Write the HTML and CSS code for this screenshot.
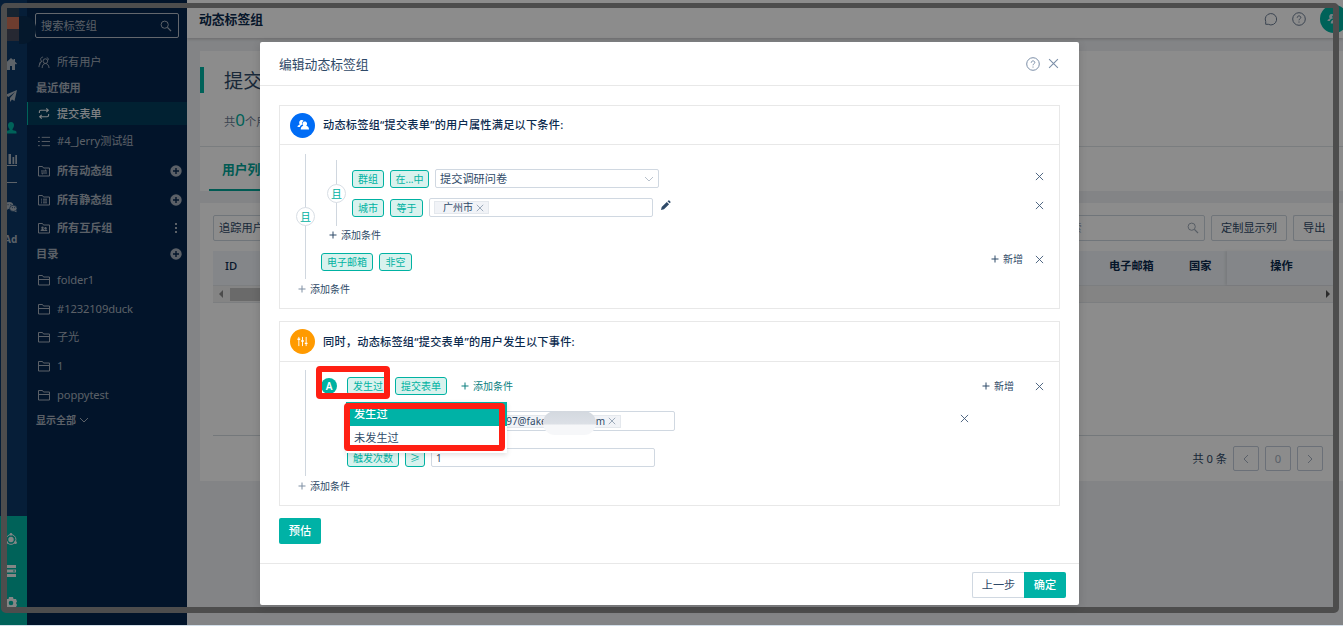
FILE: index.html
```html
<!DOCTYPE html>
<html lang="zh-CN">
<head>
    <meta charset="UTF-8">
    <meta name="viewport" content="width=device-width, initial-scale=1.0">
    <title>动态标签组</title>
    <link rel="stylesheet" href="styles.css">
</head>
<body>

<!-- 图标 -->
<svg class="sprite" xmlns="http://www.w3.org/2000/svg">
    <symbol id="i-search" viewBox="0 0 12 12"><circle cx="4.7" cy="4.7" r="3.6" fill="none" stroke="currentColor"/><path d="M7.4 7.4 11 11" stroke="currentColor" stroke-width="1.2"/></symbol>
    <symbol id="i-x" viewBox="0 0 10 10"><path d="M1 1l8 8M9 1l-8 8" fill="none" stroke="currentColor"/></symbol>
    <symbol id="i-plus" viewBox="0 0 8 8"><path d="M4 .5v7M.5 4h7" fill="none" stroke="currentColor"/></symbol>
    <symbol id="i-down" viewBox="0 0 10 10"><path d="M1 3l4 4 4-4" fill="none" stroke="currentColor"/></symbol>
    <symbol id="i-help" viewBox="0 0 14 14"><circle cx="7" cy="7" r="6.3" fill="none" stroke="currentColor"/><path d="M5.2 5.7c0-2.4 3.6-2.3 3.6-.2C8.8 6.8 7 6.8 7 8.3M7 9.500v1.100" fill="none" stroke="currentColor"/></symbol>
    <symbol id="i-add" viewBox="0 0 12 12"><circle cx="6" cy="6" r="5.7" fill="currentColor"/><path d="M6 3v6M3 6h6" stroke="#04264e" stroke-width="1.4"/></symbol>
    <symbol id="i-folder" viewBox="0 0 12 12"><path d="M.5 1.5h4l1 1.5h6v8H.5zM.5 5.5h11" fill="none" stroke="currentColor"/></symbol>
    <symbol id="i-folder-sync" viewBox="0 0 12 12"><path d="M.5 1.5h4l1 1.5h6v8H.5zM3 6h5.500L7 4.700M9 8H3.500L5 9.300" fill="none" stroke="currentColor"/></symbol>
    <symbol id="i-folder-list" viewBox="0 0 12 12"><path d="M.5 1.5h4l1 1.5h6v8H.5zM3 5.200h1M5 5.200h4M3 7h1M5 7h4M3 8.800h1M5 8.800h4" fill="none" stroke="currentColor"/></symbol>
    <symbol id="i-folder-users" viewBox="0 0 12 12"><path d="M.5 1.5h4l1 1.5h6v8H.5z" fill="none" stroke="currentColor"/><circle cx="4.500" cy="5.700" r="1.200" fill="currentColor"/><circle cx="7.500" cy="6.300" r="1.200" fill="currentColor"/><path d="M2.500 9c.3-2.500 3.500-2.500 3.800-.8 1-1.300 3-.8 3.200.8z" fill="currentColor"/></symbol>
    <symbol id="i-users" viewBox="0 0 13 14"><path d="M2 9.500C1.500 7 3 6 4 5.500 1.500 3.500 3.500 1 5.500 1.200M4.200 5.700C3 6.500 1.200 8.500 1 12" fill="none" stroke="currentColor"/><circle cx="8" cy="5.500" r="2.500" fill="none" stroke="currentColor"/><path d="M4.500 13c0-6.500 7-6.500 7.500 0M9.500 1.500c1.500.5 2 2 1.500 3" fill="none" stroke="currentColor"/></symbol>
    <symbol id="i-sync" viewBox="0 0 13 13"><path d="M1.500 6V4.500c0-1 .5-1.500 1.500-1.500h8M9 1l2.200 2L9 5M11.500 7v1.500c0 1-.5 1.500-1.500 1.500H2M4 8l-2.200 2L4 12" fill="none" stroke="currentColor" stroke-width="1.200"/></symbol>
    <symbol id="i-list" viewBox="0 0 13 11"><path d="M0 1h2M4 1h9M0 5.500h2M4 5.500h9M0 10h2M4 10h9" stroke="currentColor"/></symbol>
    <symbol id="i-home" viewBox="0 0 12 12"><path d="M6 0 0 5.500 1 6.500 2 5.800V12h3V8h2v4h3V5.800l1 .7 1-1-2-1.800V1H8.500v1.300z" fill="currentColor"/></symbol>
    <symbol id="i-send" viewBox="0 0 12 12"><path d="M12 0 0 5l3.500 2L10 2 5 8v4l2-2.500L9.500 11z" fill="currentColor"/></symbol>
    <symbol id="i-user" viewBox="0 0 12 12"><path d="M6 0c2 0 3 1.500 3 3.200S8 6.500 7.500 7v1c2 .6 4 1 4 2v1.500H.5V10c0-1 2-1.400 4-2V7C4 6.500 3 5 3 3.200S4 0 6 0z" fill="currentColor"/></symbol>
    <symbol id="i-chart" viewBox="0 0 12 12"><path d="M0 11.500h12" stroke="currentColor"/><path d="M0 5h2v5H0zM3.500 0H6v10H3.500zM7.500 3h1.700v7H7.500zM10.300 1H12v9h-1.700z" fill="currentColor"/></symbol>
    <symbol id="i-wechat" viewBox="0 0 13 12"><ellipse cx="4.500" cy="4.500" rx="4.500" ry="3.800" fill="currentColor"/><path d="M1.500 9.500 2 7l2 1z" fill="currentColor"/><ellipse cx="9" cy="7.500" rx="4" ry="3.300" fill="currentColor" stroke="#0b3866" stroke-width=".7"/><path d="M10 10.500l2.300-.8.200 2z" fill="currentColor"/><path d="M2.800 3.500h1M5.800 3.500h1M7.500 6.700h1M10 6.700h1" stroke="#0b3866"/></symbol>
    <symbol id="i-orbit" viewBox="0 0 12 12"><circle cx="6" cy="6.500" r="2.700" fill="currentColor"/><circle cx="6" cy="6.500" r="4.900" fill="none" stroke="currentColor"/><circle cx="6" cy="1.300" r="1.300" fill="currentColor"/><circle cx="1.600" cy="9.500" r="1.500" fill="currentColor"/><circle cx="10.400" cy="9.500" r="1.500" fill="currentColor"/></symbol>
    <symbol id="i-server" viewBox="0 0 12 12"><path d="M0 0h11v3H0zM0 4.500h11v3H0zM0 9h11v3H0z" fill="currentColor"/><path d="M8 6h2" stroke="#00b2a2"/></symbol>
    <symbol id="i-gear" viewBox="0 0 12 12"><path fill-rule="evenodd" d="M4 0h4l.5 2H11l1 2.500-1 1.500 1 2-1 2H8.500L8 12H4l-.5-2H1L0 8l1-2-1-1.500L1 2h2.500zM6 3.700a2.300 2.300 0 1 0 0 4.600 2.300 2.300 0 1 0 0-4.600z" fill="currentColor"/></symbol>
    <symbol id="i-chat" viewBox="0 0 14 14"><path d="M1.700 12.300V9.500A5.700 5.700 0 1 1 4.300 12.300z" fill="none" stroke="currentColor"/></symbol>
    <symbol id="i-people" viewBox="0 0 12 12"><path d="M4.500 1c1 0 1.700.4 2 1C5 2.800 4.800 4 5.300 5.500 4 6 3 7 2.900 8H.5c0-1.400 1-2 2.300-2.500C1.500 3.500 2.500 1 4.500 1z" fill="currentColor"/><path d="M7.800 2.500c2.300 0 3 2.600 1.500 4.300C11 7.400 12 8 12 10.500H3.700c0-2 1-3 2.600-3.700-1.500-1.700-.8-4.300 1.500-4.300z" fill="currentColor"/></symbol>
    <symbol id="i-sliders" viewBox="0 0 12 12"><path d="M2 1v10M6 1v10M10 1v10" stroke="currentColor"/><path d="M.5 3.500h3M4.500 5.500h3M8.500 8h3" stroke="currentColor" stroke-width="1.500"/></symbol>
    <symbol id="i-pencil" viewBox="0 0 10 10"><path d="M0 10l.7-3L5.800 2l2.300 2.200L3 9.300zM6.500 1.300 7.500.4c.5-.5 2.500 1.400 2 2l-.8.900z" fill="currentColor"/></symbol>
</svg>

<div class="app">
    <nav class="rail">
        <div class="logo"><i></i><i></i><i></i></div>
        <svg class="rail-icon"><use href="#i-home"/></svg>
        <svg class="rail-icon"><use href="#i-send"/></svg>
        <svg class="rail-icon active"><use href="#i-user"/></svg>
        <svg class="rail-icon"><use href="#i-chart"/></svg>
        <span class="rail-line"></span>
        <svg class="rail-icon"><use href="#i-wechat"/></svg>
        <b class="rail-ad">Ad</b>
        <div class="rail-bottom">
            <svg class="rail-icon"><use href="#i-orbit"/></svg>
            <svg class="rail-icon"><use href="#i-server"/></svg>
            <svg class="rail-icon"><use href="#i-gear"/></svg>
        </div>
    </nav>

    <aside class="sidebar">
        <div class="side-search"><span>搜索标签组</span><svg class="s12"><use href="#i-search"/></svg></div>
        <div class="side-item first"><svg class="s13"><use href="#i-users"/></svg>所有用户</div>
        <div class="side-title recent">最近使用</div>
        <div class="side-item current"><svg class="s13"><use href="#i-sync"/></svg>提交表单</div>
        <div class="side-item tall"><svg class="s13"><use href="#i-list"/></svg>#4_Jerry测试组</div>
        <div class="side-item bold"><svg class="s12"><use href="#i-folder-sync"/></svg>所有动态组<svg class="s12 end"><use href="#i-add"/></svg></div>
        <div class="side-item bold"><svg class="s12"><use href="#i-folder-list"/></svg>所有静态组<svg class="s12 end"><use href="#i-add"/></svg></div>
        <div class="side-item bold"><svg class="s12"><use href="#i-folder-users"/></svg>所有互斥组<span class="dots end"><i></i><i></i><i></i></span></div>
        <div class="side-title">目录<svg class="s12 end"><use href="#i-add"/></svg></div>
        <div class="side-item"><svg class="s12"><use href="#i-folder"/></svg>folder1</div>
        <div class="side-item"><svg class="s12"><use href="#i-folder"/></svg>#1232109duck</div>
        <div class="side-item"><svg class="s12"><use href="#i-folder"/></svg>子光</div>
        <div class="side-item"><svg class="s12"><use href="#i-folder"/></svg>1</div>
        <div class="side-item"><svg class="s12"><use href="#i-folder"/></svg>poppytest</div>
        <div class="side-more">显示全部<svg class="s10"><use href="#i-down"/></svg></div>
    </aside>

    <main class="main">
        <header class="topbar">
            <h1>动态标签组</h1>
            <svg class="s14 chat"><use href="#i-chat"/></svg>
            <svg class="s14"><use href="#i-help"/></svg>
            <span class="avatar"><svg class="s12"><use href="#i-people"/></svg></span>
        </header>
        <section class="card summary">
            <h2>提交表单</h2>
            <p class="count">共<em>0</em>个用户</p>
            <div class="tabs"><span class="tab">用户列表</span></div>
        </section>
        <section class="card list">
            <div class="toolbar">
                <span class="box track">追踪用户</span>
                <span class="box find"><span>输入搜索</span><svg class="s12"><use href="#i-search"/></svg></span>
                <span class="box">定制显示列</span>
                <span class="box export">导出</span>
            </div>
            <div class="thead">
                <span class="th id">ID</span>
                <span class="th mail">电子邮箱</span>
                <span class="th country">国家</span>
                <span class="th ops">操作</span>
            </div>
            <div class="hscroll"><i class="arrow left"></i><i class="thumb"></i><i class="arrow right"></i></div>
            <div class="tbody"></div>
            <div class="pager">
                <span>共 0 条</span>
                <span class="page"><svg class="s10 prev"><use href="#i-down"/></svg></span>
                <span class="page">0</span>
                <span class="page"><svg class="s10 next"><use href="#i-down"/></svg></span>
            </div>
        </section>
    </main>
    <span class="logo-blur"></span>
</div>

<div class="mask"></div>
<div class="frame"></div>

<div class="modal">
    <div class="modal-head">
        <span>编辑动态标签组</span>
        <svg class="s14 help"><use href="#i-help"/></svg>
        <svg class="s11"><use href="#i-x"/></svg>
    </div>

    <div class="modal-body">
        <!-- 用户属性 -->
        <section class="panel attrs">
            <div class="panel-head"><span class="badge blue"><svg class="s12"><use href="#i-people"/></svg></span>动态标签组“提交表单”的用户属性满足以下条件:</div>
            <div class="group outer">
                <div class="joint"><span class="and">且</span></div>
                <div class="rows">
                    <div class="group inner">
                        <div class="joint"><span class="and">且</span></div>
                        <div class="rows">
                            <div class="row">
                                <span class="tag">群组</span>
                                <span class="tag w39">在...中</span>
                                <span class="field select">提交调研问卷<svg class="s10"><use href="#i-down"/></svg></span>
                                <svg class="s9 remove"><use href="#i-x"/></svg>
                            </div>
                            <div class="row">
                                <span class="tag">城市</span>
                                <span class="tag w33">等于</span>
                                <span class="field"><span class="chip">广州市<svg class="s8"><use href="#i-x"/></svg></span></span>
                                <svg class="s10 pencil"><use href="#i-pencil"/></svg>
                                <svg class="s9 remove"><use href="#i-x"/></svg>
                            </div>
                        </div>
                    </div>
                    <div class="add inner-add"><svg class="s8"><use href="#i-plus"/></svg>添加条件</div>
                    <div class="row mail-row">
                        <span class="tag w52">电子邮箱</span>
                        <span class="tag w33">非空</span>
                        <span class="new"><svg class="s8"><use href="#i-plus"/></svg>新增</span>
                        <svg class="s9 remove"><use href="#i-x"/></svg>
                    </div>
                </div>
            </div>
            <div class="add outer-add"><svg class="s8"><use href="#i-plus"/></svg>添加条件</div>
        </section>

        <!-- 用户事件 -->
        <section class="panel events">
            <div class="panel-head"><span class="badge orange"><svg class="s11"><use href="#i-sliders"/></svg></span>同时，动态标签组“提交表单”的用户发生以下事件:</div>
            <div class="group outer">
                <div class="joint"></div>
                <div class="rows">
                    <div class="row event-row">
                        <span class="letter">A</span>
                        <span class="tag w42">发生过</span>
                        <span class="tag w52">提交表单</span>
                        <span class="add green"><svg class="s8"><use href="#i-plus"/></svg>添加条件</span>
                        <span class="new"><svg class="s8"><use href="#i-plus"/></svg>新增</span>
                        <svg class="s9 remove"><use href="#i-x"/></svg>
                    </div>
                    <div class="row value-row">
                        <span class="field"><span class="chip mail-chip"><span>297@fake</span><span>m</span><svg class="s8"><use href="#i-x"/></svg></span></span>
                        <svg class="s9 remove"><use href="#i-x"/></svg>
                    </div>
                    <div class="row times-row">
                        <span class="tag w52">触发次数</span>
                        <span class="tag w20">≥</span>
                        <span class="field">1</span>
                    </div>
                </div>
            </div>
            <div class="add outer-add"><svg class="s8"><use href="#i-plus"/></svg>添加条件</div>
        </section>

        <button class="btn primary">预估</button>
    </div>

    <div class="modal-foot">
        <button class="btn plain">上一步</button>
        <button class="btn primary last">确定</button>
    </div>

    <!-- 下拉菜单和标注 -->
    <span class="smudge"></span>
    <ul class="dropdown">
        <li class="on">发生过</li>
        <li>未发生过</li>
    </ul>
    <span class="mark mark-tag"></span>
    <span class="mark mark-menu"></span>
</div>

</body>
</html>
```
FILE: styles.css
```css
* {
    box-sizing: border-box;
}
body {
    margin: 0;
    height: 626px;
    overflow: hidden;
    background: #d3dfe9;
    font-family: "Noto Sans", "Noto Sans CJK SC", sans-serif;
    font-size: 11.2px;
    line-height: 16px;
    color: #2f4a68;
}
h1, h2, p, ul {
    margin: 0;
    padding: 0;
    font-weight: 400;
    list-style: none;
}
svg {
    flex: none;
    display: block;
}
.sprite {
    position: absolute;
    width: 0;
    height: 0;
}
.s8 { width: 8px; height: 8px; }
.s9 { width: 9px; height: 9px; }
.s10 { width: 10px; height: 10px; }
.s11 { width: 11px; height: 11px; }
.s12 { width: 12px; height: 12px; }
.s13 { width: 13px; height: 13px; }
.s14 { width: 14px; height: 14px; }
.end {
    margin-left: auto;
}

.app {
    display: flex;
    height: 625px;
    background: #eef0f4;
}

/* 左侧图标栏 */
.rail {
    width: 27px;
    display: flex;
    flex-direction: column;
    background: #0b3866;
    color: #a9b4c0;
}
.logo {
    width: 13px;
    height: 34px;
    margin: 8px 0 16px 6px;
    display: flex;
    flex-direction: column;
}
.logo i {
    height: 9px;
    background: #294259;
}
.logo i:nth-child(2) {
    height: 12px;
    background: #c97056;
}
.logo i:nth-child(3) {
    height: 12px;
    background: #46495c;
}
.logo-blur {
    position: absolute;
    left: 19px;
    top: 16px;
    width: 17px;
    height: 28px;
    border-radius: 0 12px 14px 0;
    background: #0a2c50;
}
.rail-icon {
    width: 12px;
    height: 12px;
    margin: 0 0 20px 5px;
}
.rail-icon.active {
    color: #00b2a2;
}
.rail-line {
    width: 11px;
    height: 1px;
    margin: -4px 0 18px 6px;
    background: #a9b4c0;
}
.rail-ad {
    margin: -2px 0 0 4px;
    font-size: 10px;
}
.rail-bottom {
    height: 109px;
    margin-top: auto;
    padding-top: 17px;
    background: #00b2a2;
    color: #f0f4f5;
}

/* 标签组侧栏 */
.sidebar {
    width: 160px;
    background: #04264e;
    color: #a6afbc;
}
.side-search {
    display: flex;
    align-items: center;
    justify-content: space-between;
    width: 144px;
    height: 25px;
    margin: 13px 0 0 8px;
    padding: 0 6px 0 5px;
    border: 1px solid #b4bcc7;
    border-radius: 2px;
}
.side-item {
    display: flex;
    align-items: center;
    height: 28.75px;
    padding: 0 5px 0 11px;
    letter-spacing: -.1px;
}
.side-item svg:first-child {
    width: 12px;
    margin-right: 7px;
}
.side-item.first {
    height: 24px;
    margin-top: 12px;
}
.side-item.tall {
    height: 32px;
}
.side-item.current {
    height: 23px;
    padding-left: 10px;
    border-left: 1px solid #00b2a2;
    background: #033c5c;
    color: #e8ecf0;
    font-weight: 500;
}
.side-item.bold {
    height: 28.5px;
}
.side-item.bold,
.side-title,
.side-more {
    font-weight: 700;
}
.side-title {
    display: flex;
    align-items: center;
    height: 23px;
    padding: 0 5px 0 9px;
}
.side-title.recent {
    height: 28px;
}
.side-more {
    display: flex;
    align-items: center;
    gap: 3px;
    height: 22px;
    padding-left: 9px;
    font-size: 10px;
}
.dots {
    display: flex;
    flex-direction: column;
    gap: 2px;
    margin-right: 5px;
}
.dots i {
    width: 2px;
    height: 2px;
    background: currentColor;
}

/* 主区域 */
.main {
    flex: 1;
    min-width: 0;
    overflow: hidden;
}
.topbar {
    display: flex;
    align-items: center;
    height: 38px;
    padding-left: 12px;
    background: #fff;
    box-shadow: 0 1px 3px rgba(0, 0, 0, .2);
}
.topbar h1 {
    font-size: 12.8px;
    font-weight: 700;
    color: #0b2a4e;
}
.topbar svg {
    color: #6b7c93;
    margin-right: 14px;
}
.topbar .chat {
    margin-left: auto;
}
.avatar {
    display: flex;
    align-items: center;
    justify-content: center;
    flex: none;
    width: 28px;
    height: 28px;
    margin-right: -5px;
    border-radius: 50%;
    background: #00b2a2;
}
.topbar .avatar svg {
    margin: 0 2px 0 0;
    color: #d8e8ee;
}
.card {
    margin-left: 13px;
    background: #fff;
}
.summary {
    height: 140px;
    margin-top: 13px;
    padding-top: 16px;
}
.summary h2 {
    height: 26px;
    padding-left: 20px;
    border-left: 4px solid #00b2a2;
    font-size: 19.2px;
    line-height: 28px;
}
.count {
    height: 53px;
    padding: 12px 0 0 24px;
    line-height: 30px;
    color: #6b7c93;
}
.count em {
    font-size: 17px;
    font-style: normal;
    color: #00b2a2;
}
.tabs {
    height: 45px;
    padding-left: 9px;
    border-top: 1px solid #dfe3e8;
}
.tab {
    display: block;
    width: 80px;
    height: 44px;
    padding-left: 13px;
    border-bottom: 2px solid #00a598;
    font-size: 12.8px;
    font-weight: 700;
    line-height: 45px;
    color: #00a598;
}
.list {
    height: 278px;
    margin-top: 12px;
    padding: 12px 10px 0 13px;
}
.toolbar {
    display: flex;
    gap: 6px;
    margin-bottom: 10px;
}
.box {
    display: flex;
    align-items: center;
    height: 26px;
    padding: 0 9px;
    border: 1px solid #cdd5de;
    border-radius: 2px;
    white-space: nowrap;
}
.track {
    width: 120px;
    padding: 0 5px;
}
.find {
    width: 174px;
    margin-left: auto;
    padding: 0 5px;
    justify-content: space-between;
    color: #a0abb8;
}
.export {
    width: 40px;
    border-right: 0;
}
.thead {
    display: flex;
    align-items: center;
    height: 34px;
    background: #f0f4f9;
    font-weight: 700;
    color: #0b2a4e;
}
.th {
    height: 34px;
    line-height: 30px;
}
.id {
    flex: 1;
    padding-left: 12px;
    font-weight: 500;
}
.mail { width: 80px; }
.country { width: 38px; }
.ops {
    width: 106px;
    padding-left: 3px;
    text-align: center;
    box-shadow: -2px 0 2px rgba(0, 0, 0, .08);
}
.hscroll {
    display: flex;
    align-items: center;
    height: 18px;
    padding: 0 3px 0 6px;
    border: 1px solid #e2e5e9;
    border-width: 1px 0;
    background: #f1f1f1;
}
.arrow {
    border: 4px solid transparent;
}
.arrow.left {
    margin-left: -4px;
    border-right-color: #8a8a8a;
}
.arrow.right {
    margin: 0 -4px 0 auto;
    border-left-color: #505050;
}
.thumb {
    width: 120px;
    height: 13px;
    margin-left: 7px;
    background: #c1c1c1;
}
.tbody {
    height: 133px;
    border-bottom: 1px solid #d4dae1;
}
.pager {
    display: flex;
    align-items: center;
    justify-content: flex-end;
    gap: 6px;
    height: 45px;
    padding-right: 10px;
}
.page {
    display: flex;
    align-items: center;
    justify-content: center;
    width: 26px;
    height: 25px;
    border: 1px solid #c3ccda;
    border-radius: 2px;
    color: #a5b0c0;
}
.prev { transform: rotate(90deg); }
.next { transform: rotate(-90deg); }

.mask {
    position: absolute;
    inset: 0 0 1px;
    background: rgba(0, 0, 0, .45);
}
.frame {
    position: absolute;
    left: 1px;
    top: 3px;
    width: 1338px;
    height: 610px;
    border: 6px solid #4d4d4d;
    border-top-width: 5px;
    border-radius: 5px;
}

/* 弹窗 */
.modal {
    position: absolute;
    left: 260px;
    top: 42px;
    width: 819px;
    height: 563px;
    border-radius: 2px;
    background: #fff;
    box-shadow: 0 2px 8px rgba(0, 0, 0, .15);
}
.modal-head {
    display: flex;
    align-items: center;
    height: 44px;
    padding: 0 20px 0 19px;
    border-bottom: 1px solid #e8e8e8;
    font-size: 12.8px;
}
.modal-head svg {
    color: #7c8fa8;
}
.modal-head .help {
    margin: 0 8px 0 auto;
}
.modal-body {
    height: 477px;
    padding: 19px 19px 0;
}
.panel {
    height: 204px;
    margin-bottom: 12px;
    border: 1px solid #e8e8e8;
}
.panel.events {
    height: 185px;
}
.panel-head {
    display: flex;
    align-items: center;
    gap: 8px;
    height: 39px;
    padding-left: 10px;
    border-bottom: 1px solid #e8e8e8;
    font-weight: 500;
    letter-spacing: .22px;
    color: #0b2a4e;
}
.events .panel-head {
    height: 40px;
}
.badge {
    display: flex;
    align-items: center;
    justify-content: center;
    width: 25px;
    height: 25px;
    border-radius: 50%;
    color: #fff;
}
.blue { background: #006cf5; }
.orange { background: #ff9a00; }

.group {
    display: flex;
}
.outer {
    height: 125px;
    margin: 9px 15px 0 16px;
}
.events .outer {
    height: 106px;
    margin-top: 8px;
}
.outer > .rows {
    flex: 1;
    margin-left: 6px;
}
.attrs .outer > .rows {
    padding-top: 6px;
}
.inner {
    height: 66px;
    padding-left: 6px;
}
.inner > .rows {
    flex: 1;
    margin-left: 6px;
    padding-top: 4px;
}
.joint {
    display: flex;
    align-items: center;
    width: 19px;
    background: linear-gradient(#d0d7df, #d0d7df) center / 1px 100% no-repeat;
}
.and {
    width: 19px;
    height: 19px;
    border: 1px solid #d8dee5;
    border-radius: 50%;
    background: #fff;
    font-size: 11px;
    line-height: 17px;
    text-align: center;
    color: #00b2a2;
}
.row {
    display: flex;
    align-items: center;
    gap: 6px;
    height: 29px;
}
.tag {
    width: 32px;
    height: 18px;
    margin-top: 1px;
    border: 1px solid #00b2a2;
    border-radius: 3px;
    background: #d9f2ee;
    font-size: 10px;
    line-height: 17px;
    text-align: center;
    white-space: nowrap;
    color: #00b2a2;
}
.w20 { width: 20px; }
.w33 { width: 33px; }
.w39 { width: 39px; }
.w42 { width: 42px; }
.w52 { width: 52px; }
.field {
    display: flex;
    align-items: center;
    width: 224px;
    height: 19px;
    padding: 0 4px;
    border: 1px solid #d0d8e1;
    border-radius: 2px;
}
.select {
    justify-content: space-between;
}
.select svg {
    color: #b8c1cc;
}
.chip {
    display: flex;
    align-items: center;
    gap: 3px;
    height: 13px;
    padding: 0 4px 0 8px;
    border: 1px solid #e4e8ed;
    background: #f1f3f7;
    font-size: 10px;
    line-height: 11px;
}
.chip svg {
    color: #8797aa;
}
.pencil {
    margin: -6px 0 0 2px;
}
.remove {
    margin: 0 0 5px auto;
    color: #3f5877;
}
.add,
.new {
    display: flex;
    align-items: center;
    gap: 4px;
    font-size: 10px;
}
.inner-add {
    height: 18px;
    margin-bottom: 1px;
    padding-left: 8px;
}
.outer-add {
    height: 20px;
    padding-left: 18px;
}
.outer-add svg {
    color: #7f8fa3;
}
.new {
    margin: 0 6px 5px auto;
}
.new + .remove {
    margin-left: 0;
}
.mail-row {
    height: 33px;
}
.event-row {
    height: 32px;
}
.event-row .tag {
    margin-top: 0;
}
.event-row .new {
    margin-right: 15px;
}
.event-row .new,
.event-row .remove {
    margin-bottom: 0;
}
.letter {
    width: 16px;
    height: 16px;
    margin-right: 4px;
    border-radius: 50%;
    background: #00b2a2;
    font-size: 10px;
    font-weight: 600;
    line-height: 16px;
    text-align: center;
    color: #fff;
}
.green {
    margin-left: 8px;
    color: #0b7f7f;
}
.value-row {
    height: 38px;
    padding: 0 75px 0 130px;
}
.value-row .field {
    height: 20px;
}
.mail-chip {
    width: 165px;
    justify-content: flex-end;
}
.mail-chip span:first-child {
    margin-right: 46px;
}
.times-row {
    height: 35px;
    padding-left: 26px;
}
.times-row .field {
    font-size: 10px;
}

.btn {
    width: 42px;
    height: 26px;
    padding: 0;
    border: 0;
    border-radius: 2px;
    font: inherit;
}
.primary {
    background: #00b2a6;
    color: #fff;
    font-weight: 500;
}
.plain {
    width: 52px;
    border: 1px solid #d0d8e1;
    border-right: 0;
    border-radius: 2px 0 0 2px;
    background: #fff;
    color: #2f4a68;
}
.last {
    border-radius: 0 2px 2px 0;
}
.modal-foot {
    display: flex;
    align-items: center;
    justify-content: flex-end;
    height: 42px;
    padding-right: 13px;
    border-top: 1px solid #e8e8e8;
}

/* 浮层 */
.smudge {
    position: absolute;
    left: 283px;
    top: 369px;
    width: 53px;
    height: 24px;
    border-radius: 12px;
    background: linear-gradient(#d3d8df 0, #dce0e6 13px, #f6f7f9 14px);
}
.dropdown {
    position: absolute;
    left: 86px;
    top: 360px;
    width: 161px;
    height: 51px;
    background: #fff;
    box-shadow: 0 2px 5px rgba(0, 0, 0, .12);
}
.dropdown li {
    height: 24px;
    padding-left: 8px;
    line-height: 24px;
}
.dropdown .on {
    background: #00b2a6;
    color: #fff;
    font-weight: 500;
}
.mark {
    position: absolute;
    border: 6px solid #ff1f13;
    border-radius: 4px;
}
.mark-tag {
    left: 56px;
    top: 324px;
    width: 74px;
    height: 33px;
}
.mark-menu {
    left: 84px;
    top: 361px;
    width: 161px;
    height: 48px;
}
```
